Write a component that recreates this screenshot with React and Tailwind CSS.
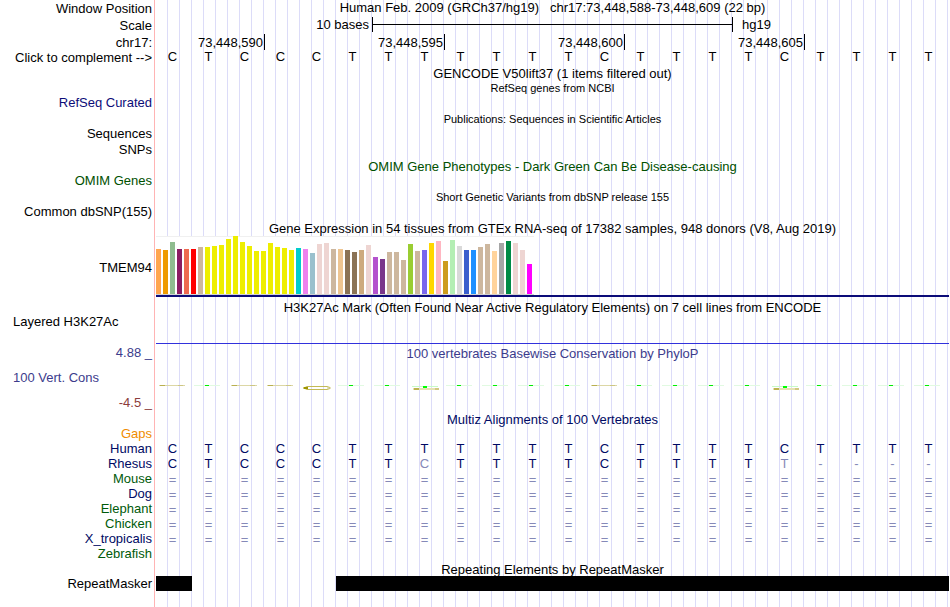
import React from "react";
import clsx from "clsx";

const bases = "CTCCCTTTTTTTCTTTTCTTTT".split("");
const rhesus = "CTCCCTTCTTTTCTTTTT----".split("");
const unaligned = ["Mouse", "Dog", "Elephant", "Chicken", "X_tropicalis"];

// label, space above it, extra classes
const labels = [
  { text: "Window Position", style: "mt-px" },
  { text: "Scale", style: "mt-0.5" },
  { text: "chr17:", style: "mt-0.5" },
  { text: "Click to complement -->", button: true },
  { text: "RefSeq Curated", style: "mt-[30px] text-[#0c0c78]" },
  { text: "Sequences", style: "mt-4" },
  { text: "SNPs", style: "mt-px" },
  { text: "OMIM Genes", style: "mt-4 text-[#005000]" },
  { text: "Common dbSNP(155)", style: "mt-4" },
  { text: "TMEM94", style: "mt-[41px]" },
  { text: "Layered H3K27Ac", style: "mt-[39px] pl-[13px] text-left" },
  { text: "4.88 _", style: "mt-4 text-[#3c3c8c]" },
  { text: "100 Vert. Cons", style: "mt-[10px] pl-[13px] text-left text-[#3c3c8c]" },
  { text: "-4.5 _", style: "mt-[10px] text-[#8c3c3c]" },
  { text: "Gaps", style: "mt-4 text-[#f08c00]" },
  { text: "Human", style: "text-[#000a64]" },
  { text: "Rhesus", style: "text-[#000a64]" },
  { text: "Mouse", style: "text-[#005a0a]" },
  { text: "Dog", style: "text-[#000a64]" },
  { text: "Elephant", style: "text-[#005a0a]" },
  { text: "Chicken", style: "text-[#005a0a]" },
  { text: "X_tropicalis", style: "text-[#000a64]" },
  { text: "Zebrafish", style: "text-[#005a0a]" },
  { text: "RepeatMasker", style: "mt-[15px]" },
];

// GTEx tissues: [bar height, colour]
const tissues = [
  [45, "#ffa54f"], [44, "#ee9a00"], [52, "#8fbc8f"], [45, "#8b1c62"],
  [45, "#ee6a50"], [45, "#ff0000"], [47, "#cdb79e"], [47, "#eeee00"],
  [48, "#eeee00"], [49, "#eeee00"], [55, "#eeee00"], [58, "#eeee00"],
  [52, "#eeee00"], [48, "#eeee00"], [43, "#eeee00"], [43, "#eeee00"],
  [51, "#eeee00"], [47, "#eeee00"], [46, "#eeee00"], [44, "#eeee00"],
  [46, "#00cdcd"], [45, "#ee82ee"], [41, "#9ac0cd"], [50, "#eed5d2"],
  [51, "#eed5d2"], [45, "#cdb79e"], [45, "#eec591"], [44, "#8b7355"],
  [42, "#8b7355"], [44, "#cdaa7d"], [49, "#eed5d2"], [37, "#b452cd"],
  [35, "#7a378b"], [42, "#cdb79e"], [42, "#cdb79e"], [34, "#cdb79e"],
  [50, "#9acd32"], [43, "#cdb79e"], [44, "#7a67ee"], [51, "#ffd700"],
  [53, "#ffb6c1"], [33, "#cd9b1d"], [54, "#b4eeb4"], [48, "#d9d9d9"],
  [44, "#3a5fcd"], [44, "#1e90ff"], [47, "#cdb79e"], [50, "#cdb79e"],
  [43, "#ffd39b"], [51, "#a6a6a6"], [53, "#008b45"], [51, "#eed5d2"],
  [44, "#eed5d2"], [30, "#ff00ff"],
];

const Title = ({ children, className }) => (
  <h2 className={clsx("h-[15px] text-center whitespace-pre", className)}>{children}</h2>
);

const BaseRow = ({ letters, faded = [], className }) => (
  <div className={clsx("grid h-[15px] grid-cols-22 pr-px text-center", className)}>
    {letters.map((letter, i) => (
      <span
        key={i}
        className={clsx("pr-[3px]", (letter === "-" || faded.includes(i)) && "text-[#8589b8]")}
      >
        {letter}
      </span>
    ))}
  </div>
);

// squashed sequence logo letter of the conservation track
const Mark = ({ index }) => {
  const base = bases[index];
  if (index === 4) {
    return (
      <svg className="h-3 w-9" viewBox="0 0 36 12" fill="none">
        <path d="M30 6.5 L27 5.5 H7 L4 7 L7 8.5 H27 L30 7.5" stroke="#c3ba55" />
        <path d="M3.5 7 H8" stroke="#a09600" strokeWidth="2" />
        <path d="M27 7 H31" stroke="#cdc682" />
      </svg>
    );
  }
  if (index === 7 || index === 17) {
    return (
      <svg className="h-3 w-9" viewBox="0 0 36 12" shapeRendering="crispEdges">
        <rect x="4" y="5" width="26" height="1" fill="#c8fac8" />
        <rect x="5" y="7" width="26" height="2" fill="#e6e1b4" />
        <rect x="6" y="7" width="5" height="2" fill="#beb450" />
        <rect x="27" y="7" width="4" height="2" fill="#d2c882" />
        <rect x="15" y="5" width="4" height="2" fill="#00ff00" />
      </svg>
    );
  }
  if (base === "C") {
    return (
      <svg className="h-3 w-9" viewBox="0 0 36 12" shapeRendering="crispEdges">
        <rect x="3" y="4" width="26" height="1" fill="#dcd7a5" />
        <rect x="4" y="4" width="5" height="1" fill="#b9b050" />
        <rect x="22" y="4" width="5" height="1" fill="#cdc682" />
      </svg>
    );
  }
  return (
    <svg className="h-3 w-9" viewBox="0 0 36 12" shapeRendering="crispEdges">
      <rect x="2" y="4" width="26" height="1" fill="#e1fae1" />
      <rect x="13" y="4" width="4" height="1" fill="#00f000" />
    </svg>
  );
};

const Tracks = () => (
  <main className="min-w-0 flex-1 bg-[repeating-linear-gradient(90deg,transparent_0_11px,#dcdcf8_11px_12px)]">
    <h1 className="h-[15px] text-center whitespace-pre">
      Human Feb. 2009 (GRCh37/hg19){"   "}chr17:73,448,588-73,448,609 (22 bp)
    </h1>

    <div className="mt-0.5 grid h-[15px] grid-cols-22 pr-px">
      <span className="col-span-6 pr-[3px] text-right">10 bases</span>
      <div className="col-span-10 -mr-px flex items-center border-x border-black">
        <div className="h-px w-full bg-black" />
      </div>
      <span className="col-span-6 pl-[10px]">hg19</span>
    </div>

    <div className="mt-0.5 grid h-[14px] grid-cols-22 pr-px text-right">
      <span className="col-span-3 -mr-px border-r border-black pt-px pr-px">73,448,590</span>
      <span className="col-span-5 -mr-px border-r border-black pt-px pr-px">73,448,595</span>
      <span className="col-span-5 -mr-px border-r border-black pt-px pr-px">73,448,600</span>
      <span className="col-span-5 -mr-px border-r border-black pt-px pr-px">73,448,605</span>
    </div>

    <BaseRow letters={bases} className="mt-px" />

    <Title className="mt-0.5">GENCODE V50lift37 (1 items filtered out)</Title>
    <Title className="text-[11px]">RefSeq genes from NCBI</Title>
    <Title className="mt-4 text-[11px]">Publications: Sequences in Scientific Articles</Title>
    <Title className="mt-8 text-[#005000]">
      OMIM Gene Phenotypes - Dark Green Can Be Disease-causing
    </Title>
    <Title className="mt-4 text-[11px]">Short Genetic Variants from dbSNP release 155</Title>

    <Title className="mt-4">
      Gene Expression in 54 tissues from GTEx RNA-seq of 17382 samples, 948 donors (V8, Aug 2019)
    </Title>
    <div className="flex h-[59px] w-[378px] items-end gap-0.5 border-b border-[#d2d2d2] bg-white inset-shadow-[0_1px_0_#f0f0f0]">
      {tissues.map(([height, color], i) => (
        <div key={i} className="w-[5px]" style={{ height, backgroundColor: color }} />
      ))}
    </div>
    <div className="h-0.5 bg-[#0c0c78]" />

    <Title className="mt-[3px]">
      H3K27Ac Mark (Often Found Near Active Regulatory Elements) on 7 cell lines from ENCODE
    </Title>
    <div className="mt-7 h-px bg-[#3232dc]" />

    <Title className="mt-0.5 text-[#3c3c8c]">
      100 vertebrates Basewise Conservation by PhyloP
    </Title>
    <div className="mt-5 grid h-3 grid-cols-22 pr-px">
      {bases.map((base, i) => (
        <Mark key={i} index={i} />
      ))}
    </div>

    <Title className="mt-[19px] text-[#000a64]">Multiz Alignments of 100 Vertebrates</Title>
    <BaseRow letters={bases} className="mt-[14px] text-[#000a64]" />
    <BaseRow letters={rhesus} faded={[7, 17]} className="text-[#000a64]" />
    {unaligned.map((species) => (
      <BaseRow key={species} letters={bases.map(() => "=")} className="pt-px text-[#8589b8]" />
    ))}

    <Title className="mt-4">Repeating Elements by RepeatMasker</Title>
    <div className="-mt-px flex h-[15px]">
      <div className="w-9 bg-black" />
      <div className="ml-36 flex-1 bg-black" />
    </div>
  </main>
);

export default function App() {
  return (
    <div className="flex min-h-screen bg-white pr-px font-['Liberation_Sans',Arial,sans-serif] text-[13px] leading-[15px] text-black">
      <aside className="mr-px flex w-[155px] shrink-0 flex-col border-r border-[#ffb4b4] pr-0.5 text-right whitespace-nowrap">
        {labels.map(({ text, style, button }) =>
          button ? (
            <button key={text} type="button" className="h-[15px] cursor-pointer text-right">
              {text}
            </button>
          ) : (
            <div key={text} className={clsx("h-[15px]", style)}>
              {text}
            </div>
          )
        )}
      </aside>
      <Tracks />
    </div>
  );
}
